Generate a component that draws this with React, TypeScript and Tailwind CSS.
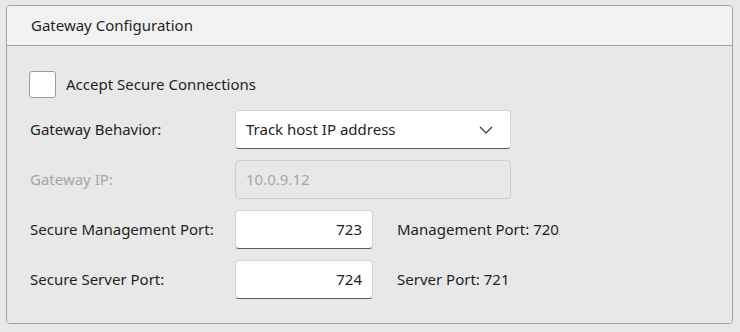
import React from "react";

const font = { fontFamily: '"Noto Sans", "Open Sans", sans-serif' };

function Field({ children, className = "" }: { children: React.ReactNode; className?: string }) {
  return (
    <div
      className={
        "h-[39px] bg-white rounded-[4px] border border-[#d4d4d4] border-b-[#5a5a5a] flex items-center " +
        className
      }
    >
      {children}
    </div>
  );
}

export default function App() {
  return (
    <div
      className="w-[740px] h-[332px] bg-[#e8e8e8] pt-[5px] pl-[6px] text-[15px] text-[#1f1f1f] leading-none"
      style={font}
    >
      <div className="w-[727px] h-[319px] border border-[#a3a3a3] rounded-[4px] overflow-hidden flex flex-col">
        <div className="h-[40px] shrink-0 bg-[#f2f2f2] border-b border-[#a3a3a3] flex items-center pl-[24px]">
          Gateway Configuration
        </div>
        <div className="flex-1 bg-[#e8e8e8] pt-[25px] pl-[22px] flex flex-col">
          <label className="flex items-center h-[26px] gap-[10px]">
            <span className="w-[27px] h-[27px] bg-white border border-[#9c9c9c] rounded-[3px]" />
            <span>Accept Secure Connections</span>
          </label>

          <div className="flex items-center mt-[13px]">
            <div className="w-[206px] pl-px">Gateway Behavior:</div>
            <Field className="w-[276px] pl-[10px] pr-[17px] justify-between">
              <span>Track host IP address</span>
              <svg width="14" height="8" viewBox="0 0 14 8" fill="none">
                <path d="M1 1l6 6 6-6" stroke="#333" strokeWidth="1.2" />
              </svg>
            </Field>
          </div>

          <div className="flex items-center mt-[11px]">
            <div className="w-[206px] pl-px text-[#a6a6a6]">Gateway IP:</div>
            <div className="w-[276px] h-[39px] rounded-[4px] border border-[#cfcfcf] flex items-center pl-[10px] text-[#a6a6a6]">
              10.0.9.12
            </div>
          </div>

          <div className="flex items-center mt-[11px]">
            <div className="w-[206px] pl-px">Secure Management Port:</div>
            <Field className="w-[138px] justify-end pr-[10px]">723</Field>
            <div className="ml-[24px]">Management Port: 720</div>
          </div>

          <div className="flex items-center mt-[11px]">
            <div className="w-[206px] pl-px">Secure Server Port:</div>
            <Field className="w-[138px] justify-end pr-[10px]">724</Field>
            <div className="ml-[24px]">Server Port: 721</div>
          </div>
        </div>
      </div>
    </div>
  );
}
